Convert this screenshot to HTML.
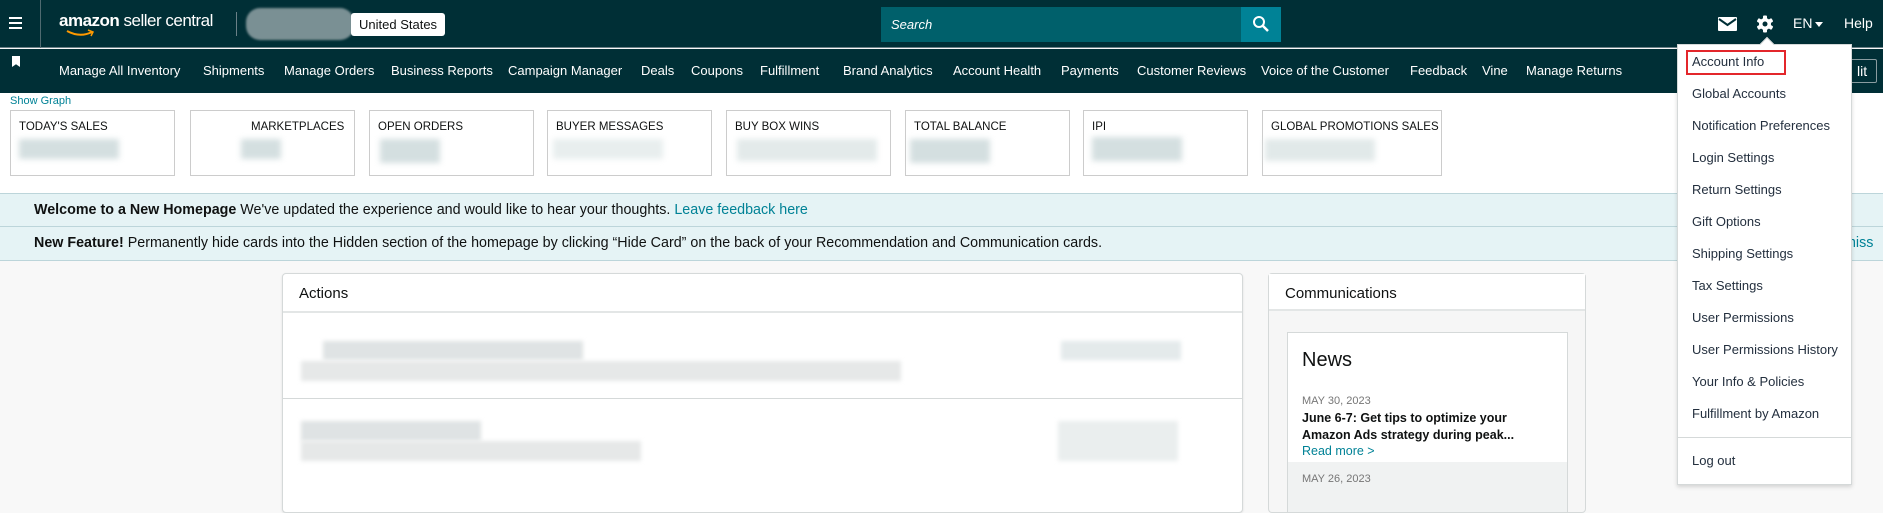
<!DOCTYPE html>
<html><head><meta charset="utf-8"><style>
*{box-sizing:border-box;margin:0;padding:0}
body{width:1883px;height:484px;overflow:hidden;background:#f8f8f8;font-family:"Liberation Sans",sans-serif;color:#0f1111;position:relative}
.abs{position:absolute}
.top{left:0;top:0;width:1883px;height:48px;background:#002f36;border-bottom:1px solid #6a8087}
.nav{left:0;top:49px;width:1883px;height:44px;background:#002f36}
.nav span{position:absolute;top:14px;color:#fff;font-size:13px;white-space:nowrap}
.white{left:0;top:93px;width:1883px;height:101px;background:#fff}
.card{top:110px;height:66px;border:1px solid #ccc;background:#fff;font-size:11.5px;padding:10px 0 0 8px}
.blur{position:absolute;background:#d4dfe0;filter:blur(3px)}
.ban{left:0;width:1883px;height:34px;background:#e5f3f5;border-bottom:1px solid #bcd5da;font-size:14.3px;padding:8px 0 0 34px;white-space:nowrap}
.dd{left:1677px;top:44px;width:175px;height:441px;background:#fff;border:1px solid #d5d9d9;box-shadow:0 2px 4px rgba(0,0,0,.15)}
.dd div{position:absolute;left:14px;font-size:13px;color:#232f3e;white-space:nowrap}
.gray{position:absolute;background:#dfe3e4;filter:blur(2px)}
</style></head><body>
<div class="abs top"></div>
<div class="abs" style="left:9px;top:17px;width:13px;height:2px;background:#fff;box-shadow:0 5px 0 #fff,0 10px 0 #fff"></div>
<div class="abs" style="left:40px;top:0;width:1px;height:48px;background:#4f6a70"></div>
<div class="abs" style="left:59px;top:11px;color:#fff;font-size:17px;letter-spacing:-.5px"><b>amazon</b> seller central</div>
<svg class="abs" style="left:66px;top:29px" width="30" height="8"><path d="M1 2 Q14 9 26 3" stroke="#f90" stroke-width="2" fill="none"/><path d="M22 1 L27 3 L25 7" stroke="#f90" stroke-width="1.5" fill="none"/></svg>
<div class="abs" style="left:236px;top:12px;width:1px;height:24px;background:#6a8087"></div>
<div class="abs" style="left:246px;top:8px;width:108px;height:32px;background:#7a9094;border-radius:14px;filter:blur(1px)"></div>
<div class="abs" style="left:351px;top:13px;width:94px;height:23px;background:#fff;border-radius:3px;font-size:13px;padding:4px 0 0 8px">United States</div>
<div class="abs" style="left:881px;top:7px;width:362px;height:35px;background:#00606b;color:#fff;font-size:13px;font-style:italic;padding:10px 0 0 10px">Search</div>
<div class="abs" style="left:1241px;top:7px;width:40px;height:35px;background:#008296"></div>
<svg class="abs" style="left:1252px;top:15px" width="18" height="18"><circle cx="7" cy="7" r="5" stroke="#fff" stroke-width="2" fill="none"/><path d="M11 11 L16 16" stroke="#fff" stroke-width="2.5"/></svg>
<svg class="abs" style="left:1718px;top:17px" width="19" height="14"><rect width="19" height="14" rx="1" fill="#fff"/><path d="M1 2 L9.5 8 L18 2" stroke="#002f36" stroke-width="2" fill="none"/></svg>
<svg class="abs" style="left:1756px;top:15px" width="18" height="18" viewBox="0 0 18 18"><g fill="#fff"><circle cx="9" cy="9" r="6"/><rect x="7" y="0.5" width="4" height="17" rx="1"/><rect x="7" y="0.5" width="4" height="17" rx="1" transform="rotate(60 9 9)"/><rect x="7" y="0.5" width="4" height="17" rx="1" transform="rotate(120 9 9)"/></g><circle cx="9" cy="9" r="2.5" fill="#002f36"/></svg>
<div class="abs" style="left:1793px;top:15px;color:#fff;font-size:14px">EN</div>
<div class="abs" style="left:1815px;top:22px;border:4px solid transparent;border-top:5px solid #fff"></div>
<div class="abs" style="left:1844px;top:15px;color:#fff;font-size:14px">Help</div>
<div class="abs nav">
<div style="position:absolute;left:12px;top:7px;width:8px;height:11px;background:#fff;clip-path:polygon(0 0,100% 0,100% 100%,50% 75%,0 100%)"></div>
<span style="left:59px">Manage All Inventory</span><span style="left:203px">Shipments</span><span style="left:284px">Manage Orders</span><span style="left:391px">Business Reports</span><span style="left:508px">Campaign Manager</span><span style="left:641px">Deals</span><span style="left:691px">Coupons</span><span style="left:760px">Fulfillment</span><span style="left:843px">Brand Analytics</span><span style="left:953px">Account Health</span><span style="left:1061px">Payments</span><span style="left:1137px">Customer Reviews</span><span style="left:1261px">Voice of the Customer</span><span style="left:1410px">Feedback</span><span style="left:1482px">Vine</span><span style="left:1526px">Manage Returns</span>
<div style="position:absolute;left:1820px;top:10px;width:57px;height:24px;border:1px solid #8a9ca0;border-radius:2px;color:#fff;font-size:14px;padding:3px 0 0 36px">lit</div>
</div>
<div class="abs white"></div>
<div class="abs" style="left:10px;top:95px;font-size:11px;color:#008296">Show Graph</div>
<div class="abs card" style="left:10px;width:165px">TODAY'S SALES<div class="blur" style="left:8px;top:28px;width:100px;height:20px"></div></div>
<div class="abs card" style="left:190px;width:165px;padding-left:60px">MARKETPLACES<div class="blur" style="left:50px;top:28px;width:40px;height:20px"></div></div>
<div class="abs card" style="left:369px;width:165px">OPEN ORDERS<div class="blur" style="left:10px;top:28px;width:60px;height:24px"></div></div>
<div class="abs card" style="left:547px;width:165px">BUYER MESSAGES<div class="blur" style="left:5px;top:28px;width:110px;height:20px;background:#e8eeee"></div></div>
<div class="abs card" style="left:726px;width:165px">BUY BOX WINS<div class="blur" style="left:10px;top:28px;width:140px;height:22px;background:#e3eaea"></div></div>
<div class="abs card" style="left:905px;width:165px">TOTAL BALANCE<div class="blur" style="left:4px;top:28px;width:80px;height:24px"></div></div>
<div class="abs card" style="left:1083px;width:165px">IPI<div class="blur" style="left:8px;top:26px;width:90px;height:24px"></div></div>
<div class="abs card" style="left:1262px;width:180px">GLOBAL PROMOTIONS SALES<div class="blur" style="left:2px;top:28px;width:110px;height:22px;background:#e1e9e9"></div></div>
<div class="abs ban" style="top:193px;border-top:1px solid #bcd5da"><b>Welcome to a New Homepage</b> We've updated the experience and would like to hear your thoughts. <span style="color:#008296">Leave feedback here</span></div>
<div class="abs ban" style="top:227px"><b>New Feature!</b> Permanently hide cards into the Hidden section of the homepage by clicking “Hide Card” on the back of your Recommendation and Communication cards.<span style="position:absolute;left:1844px;color:#008296">miss</span></div>
<div class="abs" style="left:282px;top:273px;width:961px;height:240px;background:#fff;border:1px solid #d5d9d9;border-radius:4px;box-shadow:0 1px 2px rgba(0,0,0,.1)">
<div style="position:absolute;left:16px;top:11px;font-size:15px">Actions</div>
<div style="position:absolute;left:0;top:37px;width:100%;height:2px;background:#e3e6e6"></div>
<div style="position:absolute;left:0;top:124px;width:100%;height:1px;background:#d5d9d9"></div>
<div class="gray" style="left:40px;top:67px;width:260px;height:19px"></div>
<div class="gray" style="left:18px;top:87px;width:600px;height:20px;background:#e6e8e8"></div>
<div class="gray" style="left:778px;top:67px;width:120px;height:19px;background:#e4eaeb"></div>
<div class="gray" style="left:18px;top:147px;width:180px;height:20px"></div>
<div class="gray" style="left:18px;top:167px;width:340px;height:20px;background:#e6e8e8"></div>
<div class="gray" style="left:775px;top:147px;width:120px;height:40px;background:#eaeeee"></div>
</div>
<div class="abs" style="left:1268px;top:273px;width:318px;height:240px;background:#f6f6f6;border:1px solid #d5d9d9;border-radius:4px">
<div style="position:absolute;left:0;top:0;width:100%;height:37px;background:#fff;border-bottom:2px solid #e3e6e6;font-size:15px;padding:11px 0 0 16px">Communications</div>
<div style="position:absolute;left:18px;top:58px;width:281px;height:180px;background:#fff;border:1px solid #d5d9d9">
<div style="position:absolute;left:14px;top:16px;font-size:20px">News</div>
<div style="position:absolute;left:14px;top:62px;font-size:11px;color:#767676">MAY 30, 2023</div>
<div style="position:absolute;left:14px;top:77px;font-size:12.5px;font-weight:bold;line-height:17px">June 6-7: Get tips to optimize your<br>Amazon Ads strategy during peak...</div>
<div style="position:absolute;left:14px;top:111px;font-size:12.5px;color:#008296">Read more &gt;</div>
<div style="position:absolute;left:0;top:129px;width:100%;height:50px;background:#f0f2f2"></div>
<div style="position:absolute;left:14px;top:140px;font-size:11px;color:#767676">MAY 26, 2023</div>
</div></div>
<div class="abs dd">
<div style="left:84px;top:-6px;width:10px;height:10px;background:#fff;transform:rotate(45deg);border-left:1px solid #d5d9d9;border-top:1px solid #d5d9d9"></div>
<div style="left:8px;top:5px;width:100px;height:25px;border:2px solid #e3262b"></div>
<div style="top:9px">Account Info</div><div style="top:41px">Global Accounts</div><div style="top:73px">Notification Preferences</div><div style="top:105px">Login Settings</div><div style="top:137px">Return Settings</div><div style="top:169px">Gift Options</div><div style="top:201px">Shipping Settings</div><div style="top:233px">Tax Settings</div><div style="top:265px">User Permissions</div><div style="top:297px">User Permissions History</div><div style="top:329px">Your Info &amp; Policies</div><div style="top:361px">Fulfillment by Amazon</div>
<div style="left:0;top:392px;width:173px;height:1px;background:#d5d9d9"></div>
<div style="top:408px">Log out</div>
</div>
</body></html>
